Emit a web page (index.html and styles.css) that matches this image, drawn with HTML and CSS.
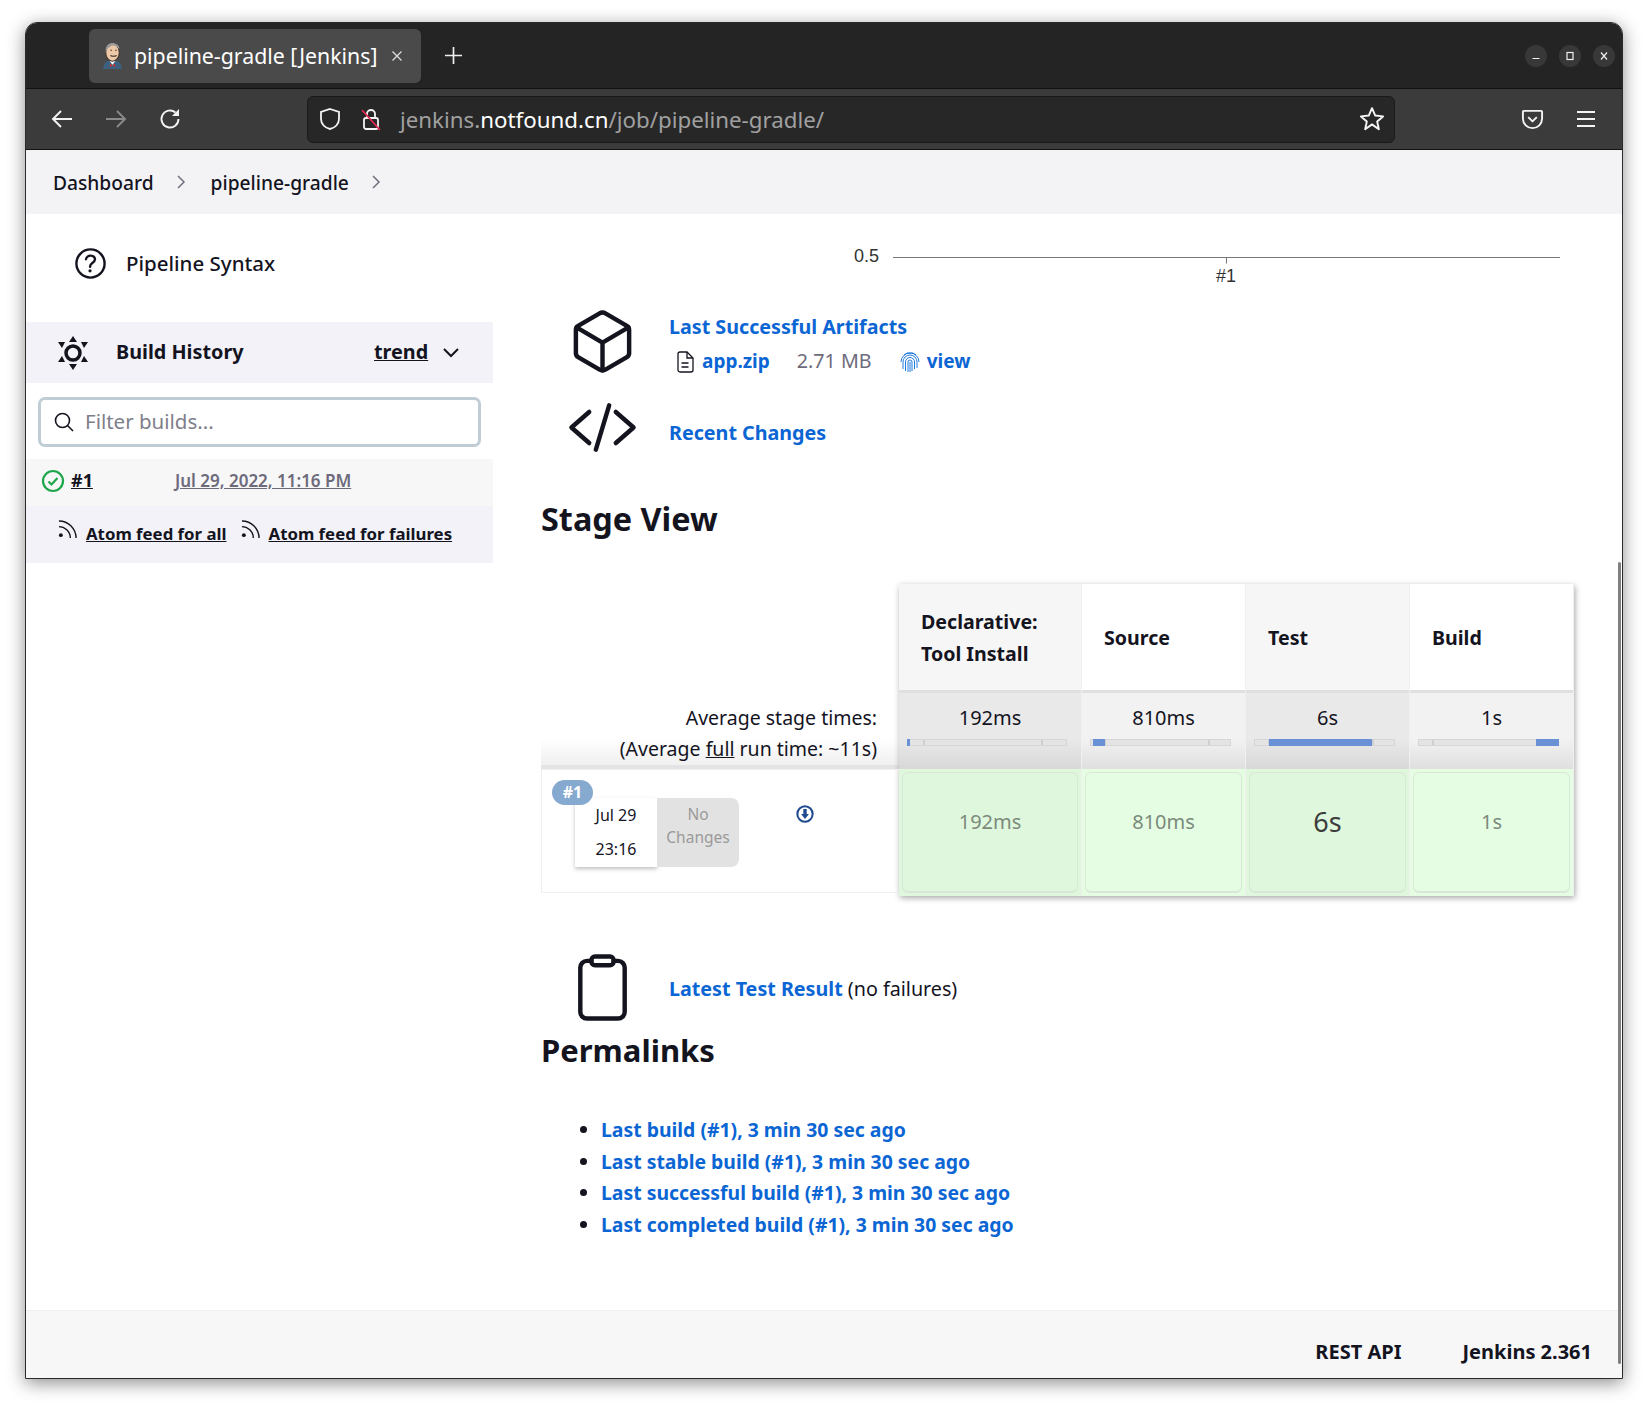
FILE: index.html
```html
<!DOCTYPE html>
<html>
  <head>
    <meta charset="utf-8">
    <title>pipeline-gradle [Jenkins]</title>
    <link rel="stylesheet" href="styles.css">
  </head>
  <body>
    <div class="window">
      <!-- TAB BAR -->
      <div class="tabbar">
        <div class="tab">
          <svg class="favicon" viewBox="0 0 20 26">
            <path d="M1 26c0-5 3-8 6-8h6c3 0 6 3 6 8z" fill="#3d5f80"/>
            <path d="M7 18l3 4 3-4z" fill="#fff"/>
            <path d="M7.500 21l2.500 1.500 2.500-1.500v3l-2.500-1.500-2.500 1.500z" fill="#d8322b"/>
            <ellipse cx="10" cy="10" rx="6.500" ry="8.500" fill="#eec9a8" stroke="#3f332c"/>
            <path d="M3.500 10C2.500 3 7 1 10 1s7 2 6.500 6c-2-3-5-4-7-3.500S5 6 3.500 10z" fill="#9a9a9a"/>
            <path d="M8 13q3 1.500 6 0M8 8h1.500M12.500 8H14" stroke="#3f332c" fill="none"/>
          </svg>
          <span class="tab-title">pipeline-gradle [Jenkins]</span>
          <svg class="tab-close" viewBox="0 0 12 12"><path d="M1.500 1.500l9 9M10.500 1.500l-9 9"/></svg>
        </div>
        <svg class="tab-new" viewBox="0 0 20 20"><path d="M10 1v18M1 10h18"/></svg>
        <div class="window-buttons">
          <span class="win-btn"><svg viewBox="0 0 10 10"><path d="M1.500 7.500h7"/></svg></span>
          <span class="win-btn"><svg viewBox="0 0 10 10"><rect x="2" y="1.500" width="6" height="7"/></svg></span>
          <span class="win-btn"><svg viewBox="0 0 10 10"><path d="M2 1.500l6 7M8 1.500l-6 7"/></svg></span>
        </div>
      </div>
      <!-- NAV BAR -->
      <div class="navbar">
        <svg class="nav-icon" viewBox="0 0 24 24"><path d="M22 12H3M11 4l-8 8 8 8"/></svg>
        <svg class="nav-icon nav-off" viewBox="0 0 24 24"><path d="M2 12h19M13 4l8 8-8 8"/></svg>
        <svg class="nav-icon" viewBox="0 0 24 24"><path d="M20.500 12a8.500 8.500 0 1 1-3-6.500"/><path class="solid" d="M21 2v7h-7z"/></svg>
        <div class="urlbar">
          <svg class="url-icon" viewBox="0 0 24 24"><path d="M12 2l9 3v7c0 5-4 9-9 10-5-1-9-5-9-10V5z"/></svg>
          <svg class="url-icon" viewBox="0 0 24 24">
            <rect x="5" y="11" width="14" height="11" rx="2"/>
            <path d="M8 11V7a4 4 0 0 1 8 0v4"/>
            <path class="strike" d="M3 3l18 20"/>
          </svg>
          <div class="url-text">jenkins.<b>notfound.cn</b>/job/pipeline-gradle/</div>
          <svg class="url-star" viewBox="0 0 24 24"><path d="M12 2l3 6.800 7.200.8-5.400 4.800 1.500 7.100L12 17l-6.300 4.500 1.500-7.100L1.800 9.600 9 8.800z"/></svg>
        </div>
        <svg class="nav-pocket" viewBox="0 0 24 24"><path d="M3 3h18a1 1 0 0 1 1 1v7a10 10 0 0 1-20 0V4a1 1 0 0 1 1-1z"/><path d="M7.500 9.500l4.500 4.500 4.500-4.500"/></svg>
        <svg class="nav-menu" viewBox="0 0 20 20"><path d="M1 3h18M1 10h18M1 17h18"/></svg>
      </div>
      <!-- BREADCRUMB -->
      <div class="breadcrumb">
        <span>Dashboard</span>
        <svg class="crumb-sep" viewBox="0 0 10 16"><path d="M2 2l6 6-6 6"/></svg>
        <span>pipeline-gradle</span>
        <svg class="crumb-sep" viewBox="0 0 10 16"><path d="M2 2l6 6-6 6"/></svg>
      </div>
      <!-- PAGE -->
      <div class="page">
        <div class="sidebar">
          <div class="side-task">
            <svg class="side-task-icon" viewBox="0 0 512 512">
              <path d="M256 80a176 176 0 1 0 176 176A176 176 0 0 0 256 80z"/>
              <path d="M200 202.290s.84-17.500 19.570-32.570C230.680 160.770 244 158.180 256 158c10.930-.14 20.690 1.670 26.530 4.450 10 4.760 29.470 16.380 29.470 41.090 0 26-17 37.810-36.370 50.800S251 281.430 251 296"/>
              <circle class="solid" cx="250" cy="348" r="20"/>
            </svg>
            <span>Pipeline Syntax</span>
          </div>
          <div class="history-head">
            <svg class="history-icon" viewBox="0 0 32 36">
              <circle cx="16" cy="18" r="7"/>
              <path class="solid" d="M16 1l4 6h-8z"/>
              <path class="solid" d="M16 35l4-6h-8z"/>
              <path class="solid" d="M1 7h7l-3 6z"/>
              <path class="solid" d="M31 7h-7l3 6z"/>
              <path class="solid" d="M1 27h7l-3-6z"/>
              <path class="solid" d="M31 27h-7l3-6z"/>
            </svg>
            <span class="history-title">Build History</span>
            <a class="history-trend">trend</a>
            <svg class="history-chevron" viewBox="0 0 16 10"><path d="M1 1l7 7 7-7"/></svg>
          </div>
          <div class="filter">
            <svg class="filter-icon" viewBox="0 0 20 20"><circle cx="8.500" cy="8.500" r="7"/><path d="M13.500 13.500l5.500 5.500"/></svg>
            <span>Filter builds...</span>
          </div>
          <div class="build-row">
            <svg class="build-ok" viewBox="0 0 24 24"><circle cx="12" cy="12" r="10"/><path d="M7.500 12.500l3 3 6-6.500"/></svg>
            <a class="build-num">#1</a>
            <a class="build-date">Jul 29, 2022, 11:16 PM</a>
          </div>
          <div class="feeds">
            <svg class="feed-icon" viewBox="0 0 20 20"><circle class="solid" cx="3" cy="16" r="2"/><path d="M1 7c6 0 12 5 12 12M1 1c10 0 18 8 18 18"/></svg>
            <a>Atom feed for all</a>
            <svg class="feed-icon" viewBox="0 0 20 20"><circle class="solid" cx="3" cy="16" r="2"/><path d="M1 7c6 0 12 5 12 12M1 1c10 0 18 8 18 18"/></svg>
            <a>Atom feed for failures</a>
          </div>
        </div>

        <div class="content">
          <!-- TREND CHART -->
          <svg class="chart" viewBox="0 0 1040 76">
            <text x="313" y="48">0.5</text>
            <path d="M352 43.500h667M685.500 43.500v6"/>
            <text x="685" y="68" text-anchor="middle">#1</text>
          </svg>
          <!-- SUMMARY -->
          <div class="summary summary-artifacts">
            <svg class="summary-icon" viewBox="0 0 512 512">
              <path d="M448 341.370V170.610A32 32 0 0 0 432.110 143l-152-88.460a47.940 47.940 0 0 0-48.240 0L79.890 143A32 32 0 0 0 64 170.610v170.760A32 32 0 0 0 79.890 369l152 88.460a48 48 0 0 0 48.240 0l152-88.460A32 32 0 0 0 448 341.370z"/>
              <path d="M69 153.990l187 110 187-110M256 463.990v-200"/>
            </svg>
            <div class="summary-text">
              <a class="link">Last Successful Artifacts</a>
              <div class="artifact">
                <svg class="doc-icon" viewBox="0 0 18 22"><path d="M2 3a2 2 0 0 1 2-2h7l6 6v12a2 2 0 0 1-2 2H4a2 2 0 0 1-2-2z"/><path d="M11 1v6h6M5.500 12h7M5.500 16h7"/></svg>
                <a class="link artifact-link">app.zip</a>
                <span class="artifact-size">2.71 MB</span>
                <svg class="print-icon" viewBox="0 0 20 22">
                  <path d="M1 11a9 9 0 0 1 18 0M3 18V11a7 7 0 0 1 14 0v6M5.500 20V11a4.500 4.500 0 0 1 9 0v7M8 21V11a2 2 0 0 1 4 0v9M10 11v10M4 4l3-2h6l3 2"/>
                </svg>
                <a class="link artifact-link">view</a>
              </div>
            </div>
          </div>
          <div class="summary summary-changes">
            <svg class="summary-icon code-icon" viewBox="0 0 512 512"><path d="M160 368L32 256l128-112M352 368l128-112-128-112M304 96l-96 320"/></svg>
            <a class="link">Recent Changes</a>
          </div>

          <h2 class="stage-title">Stage View</h2>

          <!-- STAGE VIEW -->
          <div class="stage">
            <div class="stage-left">
              <div class="stage-avg">
                <div>Average stage times:</div>
                <div>(Average <u>full</u> run time: ~11s)</div>
              </div>
              <div class="stage-build">
                <span class="build-badge">#1</span>
                <div class="build-when">
                  <div>Jul 29</div>
                  <div>23:16</div>
                </div>
                <div class="build-changes">No<br>Changes</div>
                <svg class="build-dl" viewBox="0 0 16 16">
                  <circle cx="8" cy="8" r="6.800"/>
                  <path class="solid" d="M6.500 3.500h3V8h2L8 12.500 4.500 8h2z"/>
                </svg>
              </div>
            </div>
            <div class="stage-grid">
              <div class="stage-col stage-col-first stage-col-odd">
                <div class="stage-head">Declarative:<br>Tool Install</div>
                <div class="stage-time">
                  <div>192ms</div>
                  <div class="bar"><span class="bar-fill" style="margin-left: 0; width: 2%;"></span></div>
                </div>
                <div class="stage-cell"><div class="stage-cell-in">192ms</div></div>
              </div>
              <div class="stage-col">
                <div class="stage-head">Source</div>
                <div class="stage-time">
                  <div>810ms</div>
                  <div class="bar"><span class="bar-fill" style="margin-left: 2%; width: 8.500%;"></span></div>
                </div>
                <div class="stage-cell"><div class="stage-cell-in">810ms</div></div>
              </div>
              <div class="stage-col stage-col-odd">
                <div class="stage-head">Test</div>
                <div class="stage-time">
                  <div>6s</div>
                  <div class="bar"><span class="bar-fill" style="margin-left: 10.500%; width: 73%;"></span></div>
                </div>
                <div class="stage-cell"><div class="stage-cell-in stage-cell-hot">6s</div></div>
              </div>
              <div class="stage-col">
                <div class="stage-head">Build</div>
                <div class="stage-time">
                  <div>1s</div>
                  <div class="bar"><span class="bar-fill" style="margin-left: 83.500%; width: 16.500%;"></span></div>
                </div>
                <div class="stage-cell"><div class="stage-cell-in">1s</div></div>
              </div>
            </div>
          </div>

          <div class="summary summary-tests">
            <svg class="summary-icon" viewBox="0 0 512 512">
              <path d="M336 64h32a48 48 0 0 1 48 48v320a48 48 0 0 1-48 48H144a48 48 0 0 1-48-48V112a48 48 0 0 1 48-48h32"/>
              <rect x="176" y="32" width="160" height="64" rx="26" ry="26"/>
            </svg>
            <div class="tests-text"><a class="link">Latest Test Result</a> <span>(no failures)</span></div>
          </div>

          <h2 class="perma-title">Permalinks</h2>
          <ul class="perma-list">
            <li><a class="link">Last build (#1), 3 min 30 sec ago</a></li>
            <li><a class="link">Last stable build (#1), 3 min 30 sec ago</a></li>
            <li><a class="link">Last successful build (#1), 3 min 30 sec ago</a></li>
            <li><a class="link">Last completed build (#1), 3 min 30 sec ago</a></li>
          </ul>
        </div>
        <div class="scrollbar"></div>
      </div>
      <!-- FOOTER -->
      <div class="footer">
        <span>REST API</span>
        <span>Jenkins 2.361</span>
      </div>
    </div>
  </body>
</html>
```

FILE: styles.css
```css
/* RESET */
html, body { margin: 0; padding: 0; background: #fff; }
body {
  padding: 22px 0 0 25px;
  height: 1385px;
  overflow: hidden;
  font-family: "Noto Sans", sans-serif;
  color: #14141f;
}
svg { display: block; flex: none; fill: none; }
svg .solid { fill: currentColor; stroke: none; }
h2 { margin: 0; }

/* WINDOW */
.window {
  width: 1596px;
  height: 1355px;
  display: flex;
  flex-direction: column;
  border: 1px solid #2a2a2a;
  border-radius: 12px 12px 0 0;
  overflow: hidden;
  background: #fff;
}
body::before {
  content: "";
  position: absolute;
  top: 22px;
  left: 25px;
  width: 1598px;
  height: 1357px;
  border-radius: 12px 12px 0 0;
  box-shadow: 0 4px 18px rgba(0, 0, 0, 0.45);
  pointer-events: none;
}

/* TAB BAR */
.tabbar {
  height: 65px;
  flex: none;
  display: flex;
  align-items: center;
  background: #242424;
  border-bottom: 1px solid #111;
  padding-left: 63px;
}
.tab {
  width: 332px;
  height: 54px;
  box-sizing: border-box;
  padding-left: 13px;
  display: flex;
  align-items: center;
  background: #4a4a4a;
  border-radius: 6px;
  color: #fff;
}
.favicon { width: 21px; height: 27px; margin-right: 11px; }
.tab-title { width: 253px; font-size: 21.300px; white-space: nowrap; }
.tab-close { width: 12px; height: 12px; margin-left: 4px; stroke: #ddd; stroke-width: 1.300; }
.tab-new { width: 19px; height: 19px; margin-left: 23px; stroke: #eee; stroke-width: 1.800; }
.window-buttons { margin-left: auto; margin-right: 7px; display: flex; gap: 12px; }
.win-btn {
  width: 22px;
  height: 22px;
  display: flex;
  align-items: center;
  justify-content: center;
  background: #383838;
  border-radius: 50%;
}
.win-btn svg { width: 10px; height: 10px; stroke: #f0f0f0; stroke-width: 1.200; }

/* NAV BAR */
.navbar {
  height: 60px;
  flex: none;
  display: flex;
  align-items: center;
  background: #3b3b3b;
  border-bottom: 1px solid #111;
}
.nav-icon { width: 24px; height: 24px; margin-left: 24px; margin-right: 4px; color: #f4f4f4; stroke: #f4f4f4; stroke-width: 1.900; }
.nav-off { stroke: #8a8a8a; margin-left: 26px; }
.nav-off + .nav-icon { margin-left: 26px; }
.urlbar {
  width: 1088px;
  height: 47px;
  margin-left: 121px;
  box-sizing: border-box;
  padding: 0 9px 0 10px;
  display: flex;
  align-items: center;
  background: #272727;
  border: 1px solid #1a1a1a;
  border-radius: 6px;
}
.url-icon { width: 24px; height: 24px; margin-right: 17px; stroke: #f4f4f4; stroke-width: 1.800; }
.url-icon .strike { stroke: #e22850; }
.url-text { font-size: 22.300px; color: #a0a0a0; white-space: nowrap; }
.url-text b { font-weight: 400; color: #fff; }
.url-star { width: 26px; height: 26px; margin-left: auto; stroke: #f4f4f4; stroke-width: 1.800; stroke-linejoin: round; }
.nav-pocket { width: 23px; height: 23px; margin-left: 126px; stroke: #f4f4f4; stroke-width: 2; stroke-linejoin: round; }
.nav-menu { width: 20px; height: 20px; margin-left: 32px; stroke: #f4f4f4; stroke-width: 2; }

/* BREADCRUMB */
.breadcrumb {
  height: 64px;
  flex: none;
  display: flex;
  align-items: center;
  padding-left: 27px;
  background: #f3f3f6;
  font-size: 19.200px;
  font-weight: 500;
}
.crumb-sep { width: 10px; height: 16px; margin: 0 25px 0 22px; stroke: #71717d; stroke-width: 1.500; }

/* PAGE */
.page { flex: 1; display: flex; position: relative; min-height: 0; }
.sidebar { width: 467px; flex: none; }
.side-task { height: 108px; box-sizing: border-box; padding: 0 0 10px 44px; display: flex; align-items: center; font-size: 20.500px; font-weight: 500; }
.side-task-icon { width: 41px; height: 41px; margin-right: 15px; stroke: #14141f; stroke-width: 30; stroke-linecap: round; }
.history-head {
  height: 61px;
  box-sizing: border-box;
  display: flex;
  align-items: center;
  padding: 0 0 2px 31px;
  background: #f2f2f8;
  font-size: 19.800px;
  font-weight: 700;
}
.history-icon { width: 32px; height: 36px; margin-top: 2px; stroke: #14141f; stroke-width: 3.500; }
.history-title { margin-left: 27px; width: 258px; }
.history-trend { text-decoration: underline; }
.history-chevron { width: 16px; height: 10px; margin: 2px 0 0 15px; stroke: #14141f; stroke-width: 2; }
.filter {
  height: 50px;
  margin: 14px 12px 12px 12px;
  box-sizing: border-box;
  display: flex;
  align-items: center;
  padding: 0 0 2px 13px;
  border: 3px solid #c0cdd4;
  border-radius: 7px;
  color: #7e7e8a;
  font-size: 20.500px;
}
.filter-icon { width: 20px; height: 20px; margin: 2px 11px 0 0; stroke: #14141f; stroke-width: 1.600; }
.build-row {
  height: 47px;
  display: flex;
  align-items: center;
  padding: 0 0 5px 15px;
  box-sizing: border-box;
  background: #f7f7f7;
  font-size: 18px;
  font-weight: 700;
}
.build-ok { width: 24px; height: 24px; margin: 2px 6px 0 0; stroke: #1ea64b; stroke-width: 2.200; }
.build-num { width: 104px; text-decoration: underline; }
.build-date { color: #6d6b7b; text-decoration: underline; font-weight: 600; font-size: 17px; }
.feeds {
  height: 57px;
  box-sizing: border-box;
  display: flex;
  align-items: center;
  padding: 0 0 5px 32px;
  background: #f2f2f8;
  font-size: 16.800px;
  font-weight: 700;
}
.feeds a { text-decoration: underline; margin-right: 14px; padding-top: 3px; }
.feed-icon { width: 19px; height: 19px; margin-right: 9px; margin-top: -6px; color: #14141f; stroke: #14141f; stroke-width: 1.500; }

/* CONTENT */
.content { flex: 1; padding-left: 48px; min-width: 0; }
.link { color: #0b66d4; font-weight: 700; }
.chart { width: 1040px; height: 76px; stroke: none; }
.chart text { font-family: "Liberation Sans", sans-serif; font-size: 18px; fill: #333; }
.chart path { stroke: #777; stroke-width: 1; }
.summary { display: flex; font-size: 19.700px; }
.summary-icon { width: 71px; height: 71px; margin: 0 31px 0 26px; stroke: #14141f; stroke-width: 32; stroke-linecap: round; stroke-linejoin: round; }
.summary-artifacts { height: 85px; margin-top: 16px; align-items: flex-start; }
.summary-artifacts .summary-text { padding-top: 7px; }
.summary-changes { height: 82px; align-items: center; }
.code-icon { margin-top: -10px; }
.artifact { display: flex; align-items: center; margin-top: 7px; padding-left: 7px; }
.doc-icon { width: 18px; height: 22px; margin: 2px 8px 0 0; stroke: #14141f; stroke-width: 1.300; }
.artifact-link { font-size: 19px; }
.artifact-size { margin-left: 27px; color: #6d6b7b; }
.print-icon { width: 20px; height: 22px; margin: 2px 7px 0 28px; stroke: #1f7ae0; stroke-width: 1; }
.stage-title { margin-top: 20px; height: 64px; font-size: 32.400px; line-height: 50px; }

/* STAGE VIEW */
.stage { display: flex; height: 314px; margin-top: 27px; align-items: flex-start; }
.stage-left { width: 358px; flex: none; padding-top: 113px; font-size: 19.500px; }
.stage-avg {
  height: 72px;
  box-sizing: border-box;
  padding: 5px 22px 0 0;
  text-align: right;
  line-height: 31px;
  background: linear-gradient(to bottom, #fff 60%, #f0f0f0 100%);
  border-bottom: 4px solid #e4e4e4;
}
.stage-build {
  position: relative;
  height: 124px;
  box-sizing: border-box;
  padding: 28px 0 0 33px;
  display: flex;
  align-items: flex-start;
  border: 1px solid #efefef;
  border-right: 0;
}
.build-badge {
  position: absolute;
  top: 10px;
  left: 10px;
  width: 41px;
  height: 25px;
  text-align: center;
  line-height: 25px;
  font-size: 16px;
  font-weight: 700;
  color: #fff;
  background: #86a9d0;
  border-radius: 13px;
}
.build-when {
  width: 82px;
  height: 69px;
  text-align: center;
  font-size: 16px;
  line-height: 34px;
  background: #fff;
  box-shadow: 0 2px 4px rgba(0, 0, 0, 0.25);
}
.build-changes {
  width: 82px;
  height: 69px;
  box-sizing: border-box;
  padding-top: 5px;
  text-align: center;
  font-size: 15.500px;
  line-height: 23px;
  color: #9a9a9a;
  background: #e2e2e2;
  border-radius: 0 8px 8px 0;
}
.build-dl { width: 18px; height: 18px; margin: 7px 0 0 57px; color: #1f4a8f; stroke: #1f4a8f; stroke-width: 1.800; }
.stage-grid { display: flex; box-shadow: 1px 2px 6px rgba(0, 0, 0, 0.35); }
.stage-col { width: 164px; border-right: 1px solid #f0f0f0; box-sizing: border-box; }
.stage-col-first { width: 183px; }
.stage-col-odd { background: #f6f6f6; }
.stage-head {
  height: 106px;
  box-sizing: border-box;
  display: flex;
  align-items: center;
  padding: 2px 0 0 22px;
  font-size: 19.600px;
  font-weight: 700;
  line-height: 32px;
}
.stage-time {
  height: 79px;
  box-sizing: border-box;
  padding-top: 10px;
  text-align: center;
  font-size: 20px;
  line-height: 29px;
  background: linear-gradient(to bottom, #f2f2f2 60%, #dfdfdf 100%);
  border-top: 3px solid #e0e0e0;
}
.stage-col-odd .stage-time { background: linear-gradient(to bottom, #e9e9e9 60%, #d8d8d8 100%); }
.bar {
  height: 7px;
  margin: 7px 14px 0 8px;
  display: flex;
  background: linear-gradient(to right, #e4e4e4 10%, #cfcfcf 10%, #cfcfcf 11%, #e4e4e4 11%, #e4e4e4 84%, #cfcfcf 84%, #cfcfcf 85%, #e4e4e4 85%);
  box-shadow: inset 0 0 0 1px #d6d6d6;
}
.bar-fill { display: block; height: 7px; background: #6a90d6; }
.stage-cell { height: 127px; box-sizing: border-box; padding: 3px; background: #e5fde3; }
.stage-col-odd .stage-cell { background: #dff7dc; }
.stage-cell-in {
  height: 121px;
  box-sizing: border-box;
  padding-top: 35px;
  text-align: center;
  font-size: 20px;
  color: #7c8a7c;
  border: 1px solid #d8e8d6;
  border-bottom-width: 2px;
  border-radius: 6px;
}
.stage-cell-hot { color: #3c3c3c; font-size: 27px; padding-top: 30px; }

/* TESTS + PERMALINKS */
.summary-tests { height: 71px; margin-top: 54px; align-items: center; }
.tests-text { padding-top: 1px; }
.perma-title { height: 60px; margin-top: 2px; font-size: 31px; line-height: 50px; }
.perma-list { margin: 29px 0 0 0; padding: 0 0 0 60px; font-size: 19.400px; line-height: 31.500px; }

/* SCROLLBAR */
.scrollbar {
  position: absolute;
  top: 348px;
  right: 1px;
  width: 3px;
  height: 802px;
  background: #808080;
  border-radius: 2px;
}

/* FOOTER */
.footer {
  height: 68px;
  flex: none;
  box-sizing: border-box;
  display: flex;
  justify-content: flex-end;
  align-items: flex-end;
  gap: 61px;
  padding: 0 30px 13px 0;
  background: #f7f7f7;
  border-top: 1px solid #f0f0f0;
  font-size: 20px;
  font-weight: 700;
}
```
